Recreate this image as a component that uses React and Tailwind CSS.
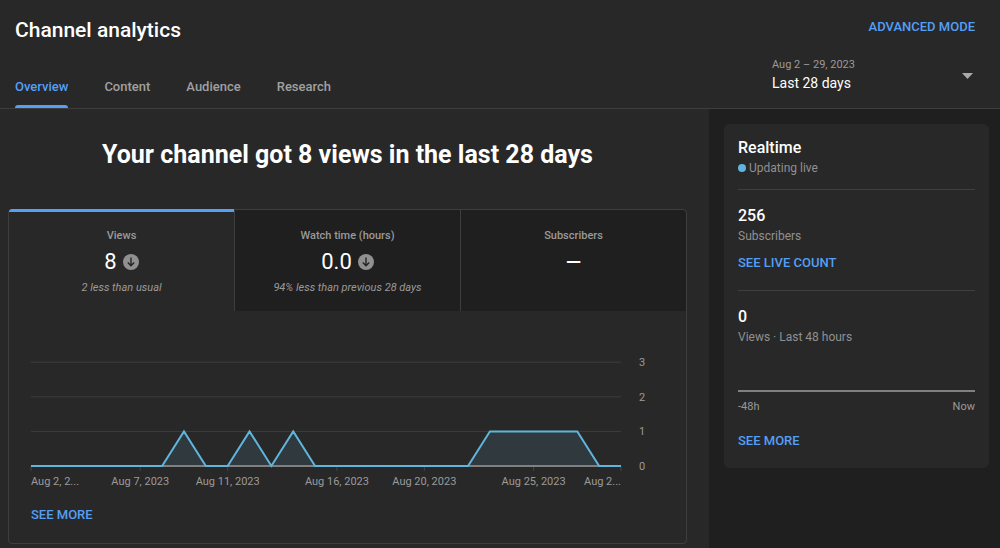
import React from 'react';

const tabs = ['Overview', 'Content', 'Audience', 'Research'];

const metrics = [
  { name: 'Views', value: '8', note: '2 less than usual', down: true },
  { name: 'Watch time (hours)', value: '0.0', note: '94% less than previous 28 days', down: true },
  { name: 'Subscribers', value: '—', note: '', down: false },
];

const dailyViews = [
  0, 0, 0, 0, 0, 0, 0, 1, 0, 0, 1, 0, 1, 0, 0, 0, 0, 0, 0, 0, 0, 1, 1, 1, 1, 1, 0, 0,
];

const dateTicks = [
  { day: 0, label: 'Aug 2, 2...', anchor: 'start' },
  { day: 5, label: 'Aug 7, 2023', anchor: 'middle' },
  { day: 9, label: 'Aug 11, 2023', anchor: 'middle' },
  { day: 14, label: 'Aug 16, 2023', anchor: 'middle' },
  { day: 18, label: 'Aug 20, 2023', anchor: 'middle' },
  { day: 23, label: 'Aug 25, 2023', anchor: 'middle' },
  { day: 27, label: 'Aug 2...', anchor: 'end' },
];

const lastDay = dailyViews.length - 1;
const yOf = (v) => 110 - v * 34.6;
const percent = (day) => `${(day / lastDay) * 100}%`;

function DownBadge() {
  return (
    <svg className="size-4" viewBox="0 0 16 16" aria-hidden="true">
      <circle cx="8" cy="8" r="8" fill="#909090" />
      <path d="M8 3.4v8.2M4.8 8.5L8 11.7l3.2-3.2" fill="none" stroke="#242424" strokeWidth="1.4" />
    </svg>
  );
}

function ActionLink({ children, className = '' }) {
  return (
    <a href="#" className={`block w-fit text-[13px] leading-5 font-medium text-[#559ff5] ${className}`}>
      {children}
    </a>
  );
}

function ViewsChart() {
  const points = dailyViews.map((v, i) => `${i},${yOf(v)}`).join(' ');
  return (
    <div className="flex">
      <svg className="h-[140px] min-w-0 flex-1 overflow-visible" role="img" aria-label="Views per day">
        {[1, 2, 3].map((v) => (
          <line key={v} x1="0" x2="100%" y1={yOf(v)} y2={yOf(v)} stroke="#3d3d3d" />
        ))}
        {dateTicks.map((t) => (
          <line key={t.day} x1={percent(t.day)} x2={percent(t.day)} y1="110" y2="115" stroke="#444444" />
        ))}
        <line x1="0" x2="100%" y1="110" y2="110" stroke="#808080" strokeWidth="2" />
        <svg width="100%" height="140" viewBox={`0 0 ${lastDay} 140`} preserveAspectRatio="none" overflow="visible">
          <polygon points={`0,109 ${points} ${lastDay},109`} fill="#5fb5dc" fillOpacity="0.12" />
          <polyline
            points={points}
            fill="none"
            stroke="#5fb5dc"
            strokeWidth="2"
            vectorEffect="non-scaling-stroke"
          />
        </svg>
        {dateTicks.map((t) => (
          <text key={t.day} x={percent(t.day)} y="129" textAnchor={t.anchor} fontSize="11" fill="#9a9a9a">
            {t.label}
          </text>
        ))}
      </svg>
      <svg className="h-[140px] w-[44px]" aria-hidden="true">
        {[0, 1, 2, 3].map((v) => (
          <text key={v} x="21" y={yOf(v) + 4} textAnchor="middle" fontSize="11" fill="#9a9a9a">
            {v}
          </text>
        ))}
      </svg>
    </div>
  );
}

function Header() {
  return (
    <header className="flex justify-between border-b border-[#3e3e3e] pr-[25px] pl-[15px]">
      <div className="pt-4">
        <h1 className="text-[21px] leading-7 font-medium text-white">Channel analytics</h1>
        <nav className="mt-[21px] flex gap-9 text-[13px] font-medium">
          {tabs.map((tab, i) => (
            <a
              key={tab}
              href="#"
              className={
                i === 0
                  ? 'relative flex h-[43px] items-center text-[#559ff5]'
                  : 'relative flex h-[43px] items-center text-[#a0a0a0]'
              }
            >
              {tab}
              {i === 0 && <span className="absolute inset-x-0 bottom-0 h-[3px] rounded-t-sm bg-[#559ff5]" />}
            </a>
          ))}
        </nav>
      </div>
      <div className="w-[203px] pt-[17px]">
        <ActionLink className="ml-auto">ADVANCED MODE</ActionLink>
        <div className="relative mt-5">
          <label htmlFor="period" className="block text-[11px] leading-4 text-[#9a9a9a]">
            Aug 2 – 29, 2023
          </label>
          <select
            id="period"
            defaultValue="28"
            className="block h-5 w-full appearance-none bg-transparent text-sm leading-5 text-white"
          >
            <option value="28">Last 28 days</option>
          </select>
          <svg
            className="pointer-events-none absolute top-4 right-0.5 h-[6px] w-[11px]"
            viewBox="0 0 11 6"
            aria-hidden="true"
          >
            <path d="M0 0h11L5.5 6z" fill="#aaaaaa" />
          </svg>
        </div>
      </div>
    </header>
  );
}

function MetricTab({ metric, index }) {
  const active = index === 0;
  return (
    <button
      type="button"
      className={
        active
          ? 'relative flex h-[101px] flex-1 flex-col items-center pt-[18px]'
          : 'relative flex h-[101px] flex-1 flex-col items-center border-l border-[#3e3e3e] bg-[#1f1f1f] pt-[18px] last:rounded-tr-sm'
      }
    >
      {active && <span className="absolute inset-x-0 -top-px h-[3px] rounded-tl-sm bg-[#559ff5]" />}
      <span className="text-[11px] leading-4 font-medium text-[#9a9a9a]">{metric.name}</span>
      <span className="mt-1 flex items-center gap-1.5 text-[22px] leading-7 text-white">
        {metric.down ? metric.value : <span className="text-xl font-medium">{metric.value}</span>}
        {metric.down && <DownBadge />}
      </span>
      <span className="mt-1 text-[11px] leading-4 text-[#9a9a9a] italic">{metric.note}</span>
    </button>
  );
}

function Realtime() {
  return (
    <aside className="w-[291px] shrink-0 bg-[#1f1f1f] pt-[15px] pr-[11px] pb-20 pl-[15px]">
      <section className="rounded-md bg-[#282828] px-[14px] pt-[14px] pb-[17px] text-xs leading-5 text-[#909090]">
        <h2 className="text-base leading-5 font-medium text-white">Realtime</h2>
        <p className="flex items-center gap-[3px]">
          <span className="size-2 rounded-full bg-[#5fb5dc]" />
          Updating live
        </p>
        <div className="mt-[11px] border-t border-[#3e3e3e] pt-4">
          <p className="text-base leading-5 font-medium text-white">256</p>
          <p>Subscribers</p>
          <ActionLink className="mt-[7px]">SEE LIVE COUNT</ActionLink>
        </div>
        <div className="mt-[17px] border-t border-[#3e3e3e] pt-4">
          <p className="text-base leading-5 font-medium text-white">0</p>
          <p>Views · Last 48 hours</p>
          <div className="mt-[43px] border-t-2 border-[#808080]" />
          <div className="mt-[5px] flex justify-between text-[11px] leading-5 text-[#9a9a9a]">
            <span>-48h</span>
            <span>Now</span>
          </div>
          <ActionLink className="mt-[14px]">SEE MORE</ActionLink>
        </div>
      </section>
    </aside>
  );
}

export default function App() {
  return (
    <div className="flex min-h-screen flex-col bg-[#282828] font-[Roboto,sans-serif]">
      <Header />
      <div className="flex flex-1">
        <main className="min-w-0 flex-1 pr-[22px] pl-2">
          <h2 className="mt-[30px] text-center text-[25px] leading-8 font-bold text-white">
            Your channel got 8 views in the last 28 days
          </h2>
          <section className="mt-[38px] rounded border border-[#3e3e3e]">
            <div className="flex">
              {metrics.map((m, i) => (
                <MetricTab key={m.name} metric={m} index={i} />
              ))}
            </div>
            <div className="pt-[45px] pr-[21px] pb-[18px] pl-[22px]">
              <ViewsChart />
              <ActionLink className="mt-[9px]">SEE MORE</ActionLink>
            </div>
          </section>
        </main>
        <Realtime />
      </div>
    </div>
  );
}
